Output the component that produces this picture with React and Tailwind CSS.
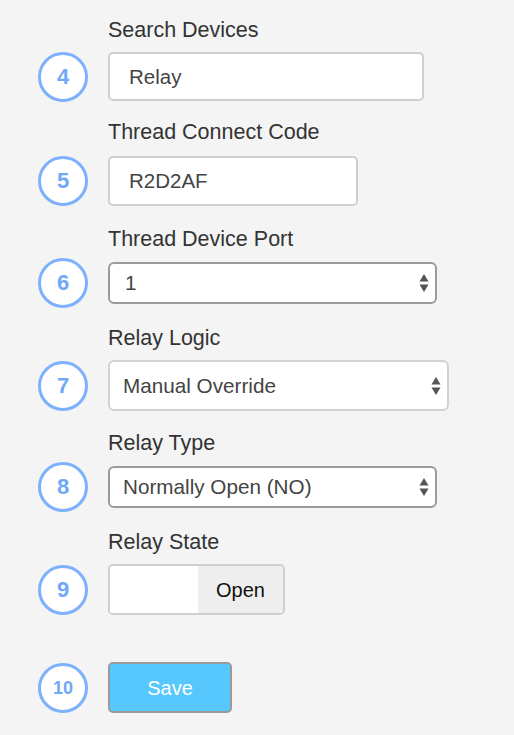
import { useState } from 'react'

function StepBadge({ n }) {
  return (
    <div className="-my-2 flex h-[50px] w-[50px] shrink-0 items-center justify-center rounded-full border-[3px] border-[#7db0fd] bg-white">
      <span
        className={
          n > 9
            ? 'text-[18px] font-bold leading-none text-[#6fa8f7]'
            : 'text-[22px] font-bold leading-none text-[#6fa8f7]'
        }
      >
        {n}
      </span>
    </div>
  )
}

function Arrows() {
  return (
    <svg width="10" height="20" viewBox="0 0 10 20" className="shrink-0">
      <path d="M5 1 L9.5 8.5 L0.5 8.5 Z" fill="#555" />
      <path d="M5 19 L9.5 11.5 L0.5 11.5 Z" fill="#555" />
    </svg>
  )
}

function SelectBox({ value, className }) {
  return (
    <div
      className={
        'flex items-center justify-between rounded-[6px] border-2 bg-white pr-[6px] text-[20.7px] text-[#444] ' +
        className
      }
    >
      <span>{value}</span>
      <Arrows />
    </div>
  )
}

function Label({ children, className }) {
  return <div className={'pl-[70px] text-[21.5px] leading-[24px] text-[#333] ' + className}>{children}</div>
}

function App() {
  const [search, setSearch] = useState('Relay')
  const [code, setCode] = useState('R2D2AF')
  const [open, setOpen] = useState(true)

  return (
    <div
      className="min-h-[735px] w-full bg-[#f4f4f4] pl-[38px] pt-[18px] text-[20px] leading-[24px]"
      style={{ fontFamily: '"Liberation Sans", Arial, sans-serif' }}
    >
      <Label className="">Search Devices</Label>
      <div className="mt-[10px] flex items-center gap-[20px]">
        <StepBadge n={4} />
        <input
          value={search}
          onChange={(e) => setSearch(e.target.value)}
          className="h-[49px] w-[316px] rounded-[5px] border-2 border-[#cfcfcf] bg-white pl-[19px] text-[20.5px] text-[#444] outline-none"
        />
      </div>

      <Label className="mt-[19px]">Thread Connect Code</Label>
      <div className="mt-[12px] flex items-center gap-[20px]">
        <StepBadge n={5} />
        <input
          value={code}
          onChange={(e) => setCode(e.target.value)}
          className="h-[50px] w-[250px] rounded-[5px] border-2 border-[#cfcfcf] bg-white pl-[19px] text-[20.5px] text-[#444] outline-none"
        />
      </div>

      <Label className="mt-[21px]">Thread Device Port</Label>
      <div className="mt-[11px] flex items-center gap-[20px]">
        <StepBadge n={6} />
        <SelectBox value="1" className="h-[42px] w-[329px] border-[#9b9b9b] pl-[15px]" />
      </div>

      <Label className="mt-[22px]">Relay Logic</Label>
      <div className="mt-[10px] flex items-center gap-[20px]">
        <StepBadge n={7} />
        <SelectBox value="Manual Override" className="h-[51px] w-[341px] border-[#d2d2d2] pl-[13px]" />
      </div>

      <Label className="mt-[20px]">Relay Type</Label>
      <div className="mt-[11px] flex items-center gap-[20px]">
        <StepBadge n={8} />
        <SelectBox value="Normally Open (NO)" className="h-[42px] w-[329px] border-[#9b9b9b] pl-[13px]" />
      </div>

      <Label className="mt-[22px]">Relay State</Label>
      <div className="mt-[10px] flex items-center gap-[20px]">
        <StepBadge n={9} />
        <button
          type="button"
          onClick={() => setOpen(!open)}
          className="flex h-[51px] w-[177px] overflow-hidden rounded-[5px] border-2 border-[#cfcfcf] bg-white"
        >
          <span className="h-full w-[88px] bg-white" />
          <span className="flex h-full flex-1 items-center justify-center bg-[#eeeeee] text-[20px] text-[#111]">
            {open ? 'Open' : 'Closed'}
          </span>
        </button>
      </div>

      <div className="mt-[47px] flex items-center gap-[20px]">
        <StepBadge n={10} />
        <button
          type="button"
          className="h-[51px] w-[124px] rounded-[5px] border-2 border-[#9a9a9a] bg-[#56c8fd] text-[20px] text-white"
        >
          Save
        </button>
      </div>
    </div>
  )
}

export default App
